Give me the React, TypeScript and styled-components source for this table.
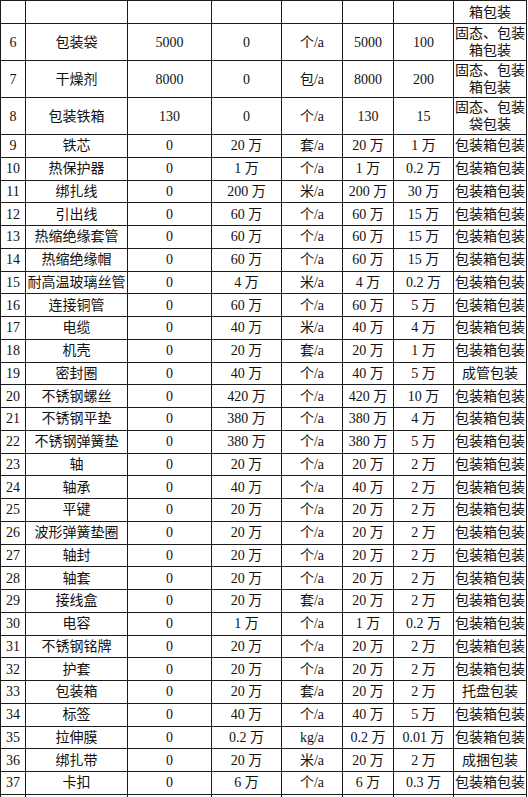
import React from "react";
import styled, { createGlobalStyle } from "styled-components";

const GlobalStyle = createGlobalStyle`
  html, body {
    margin: 0;
    padding: 0;
    background: #fff;
  }
  body {
    font-family: "Liberation Serif", "Noto Sans CJK SC", serif;
    color: #111;
  }
`;

type Row = {
  no: string;
  name: string;
  before: string;
  added: string;
  unit: string;
  total: string;
  stock: string;
  pack: string[];
};

const colWidths = [25, 102, 84, 70, 61, 51, 60, 73];

const pk = ["包装箱包装"];

const rows: Row[] = [
  { no: "6", name: "包装袋", before: "5000", added: "0", unit: "个/a", total: "5000", stock: "100", pack: ["固态、包装", "箱包装"] },
  { no: "7", name: "干燥剂", before: "8000", added: "0", unit: "包/a", total: "8000", stock: "200", pack: ["固态、包装", "箱包装"] },
  { no: "8", name: "包装铁箱", before: "130", added: "0", unit: "个/a", total: "130", stock: "15", pack: ["固态、包装", "袋包装"] },
  { no: "9", name: "铁芯", before: "0", added: "20 万", unit: "套/a", total: "20 万", stock: "1 万", pack: pk },
  { no: "10", name: "热保护器", before: "0", added: "1 万", unit: "个/a", total: "1 万", stock: "0.2 万", pack: pk },
  { no: "11", name: "绑扎线", before: "0", added: "200 万", unit: "米/a", total: "200 万", stock: "30 万", pack: pk },
  { no: "12", name: "引出线", before: "0", added: "60 万", unit: "个/a", total: "60 万", stock: "15 万", pack: pk },
  { no: "13", name: "热缩绝缘套管", before: "0", added: "60 万", unit: "个/a", total: "60 万", stock: "15 万", pack: pk },
  { no: "14", name: "热缩绝缘帽", before: "0", added: "60 万", unit: "个/a", total: "60 万", stock: "15 万", pack: pk },
  { no: "15", name: "耐高温玻璃丝管", before: "0", added: "4 万", unit: "米/a", total: "4 万", stock: "0.2 万", pack: pk },
  { no: "16", name: "连接铜管", before: "0", added: "60 万", unit: "个/a", total: "60 万", stock: "5 万", pack: pk },
  { no: "17", name: "电缆", before: "0", added: "40 万", unit: "米/a", total: "40 万", stock: "4 万", pack: pk },
  { no: "18", name: "机壳", before: "0", added: "20 万", unit: "套/a", total: "20 万", stock: "1 万", pack: pk },
  { no: "19", name: "密封圈", before: "0", added: "40 万", unit: "个/a", total: "40 万", stock: "5 万", pack: ["成管包装"] },
  { no: "20", name: "不锈钢螺丝", before: "0", added: "420 万", unit: "个/a", total: "420 万", stock: "10 万", pack: pk },
  { no: "21", name: "不锈钢平垫", before: "0", added: "380 万", unit: "个/a", total: "380 万", stock: "4 万", pack: pk },
  { no: "22", name: "不锈钢弹簧垫", before: "0", added: "380 万", unit: "个/a", total: "380 万", stock: "5 万", pack: pk },
  { no: "23", name: "轴", before: "0", added: "20 万", unit: "个/a", total: "20 万", stock: "2 万", pack: pk },
  { no: "24", name: "轴承", before: "0", added: "40 万", unit: "个/a", total: "40 万", stock: "2 万", pack: pk },
  { no: "25", name: "平键", before: "0", added: "20 万", unit: "个/a", total: "20 万", stock: "2 万", pack: pk },
  { no: "26", name: "波形弹簧垫圈", before: "0", added: "20 万", unit: "个/a", total: "20 万", stock: "2 万", pack: pk },
  { no: "27", name: "轴封", before: "0", added: "20 万", unit: "个/a", total: "20 万", stock: "2 万", pack: pk },
  { no: "28", name: "轴套", before: "0", added: "20 万", unit: "个/a", total: "20 万", stock: "2 万", pack: pk },
  { no: "29", name: "接线盒", before: "0", added: "20 万", unit: "套/a", total: "20 万", stock: "2 万", pack: pk },
  { no: "30", name: "电容", before: "0", added: "1 万", unit: "个/a", total: "1 万", stock: "0.2 万", pack: pk },
  { no: "31", name: "不锈钢铭牌", before: "0", added: "20 万", unit: "个/a", total: "20 万", stock: "2 万", pack: pk },
  { no: "32", name: "护套", before: "0", added: "20 万", unit: "个/a", total: "20 万", stock: "2 万", pack: pk },
  { no: "33", name: "包装箱", before: "0", added: "20 万", unit: "套/a", total: "20 万", stock: "2 万", pack: ["托盘包装"] },
  { no: "34", name: "标签", before: "0", added: "40 万", unit: "个/a", total: "40 万", stock: "5 万", pack: pk },
  { no: "35", name: "拉伸膜", before: "0", added: "0.2 万", unit: "kg/a", total: "0.2 万", stock: "0.01 万", pack: pk },
  { no: "36", name: "绑扎带", before: "0", added: "20 万", unit: "米/a", total: "20 万", stock: "2 万", pack: ["成捆包装"] },
  { no: "37", name: "卡扣", before: "0", added: "6 万", unit: "个/a", total: "6 万", stock: "0.3 万", pack: pk },
];

const Sheet = styled.table`
  width: 526px;
  border-collapse: collapse;
  table-layout: fixed;
  font-size: 14px;
  line-height: 17px;
`;

const TableRow = styled.tr<{ $tall?: boolean; $h?: number }>`
  height: ${({ $tall, $h }) => ($h ? `${$h}px` : $tall ? "37px" : "22.75px")};
`;

const Cell = styled.td`
  border: 1px solid #1c1c1c;
  padding: 0;
  text-align: center;
  vertical-align: middle;
  white-space: nowrap;
  overflow: hidden;
`;

const App: React.FC = () => {
  return (
    <>
      <GlobalStyle />
      <Sheet>
        <colgroup>
          {colWidths.map((w, i) => (
            <col key={i} style={{ width: w }} />
          ))}
        </colgroup>
        <tbody>
          <TableRow $h={23}>
            <Cell />
            <Cell />
            <Cell />
            <Cell />
            <Cell />
            <Cell />
            <Cell />
            <Cell>箱包装</Cell>
          </TableRow>
          {rows.map((r) => (
            <TableRow key={r.no} $tall={r.pack.length > 1}>
              <Cell>{r.no}</Cell>
              <Cell>{r.name}</Cell>
              <Cell>{r.before}</Cell>
              <Cell>{r.added}</Cell>
              <Cell>{r.unit}</Cell>
              <Cell>{r.total}</Cell>
              <Cell>{r.stock}</Cell>
              <Cell>
                {r.pack.map((p, i) => (
                  <React.Fragment key={i}>
                    {i > 0 && <br />}
                    {p}
                  </React.Fragment>
                ))}
              </Cell>
            </TableRow>
          ))}
          <TableRow $h={20}>
            <Cell />
            <Cell />
            <Cell />
            <Cell />
            <Cell />
            <Cell />
            <Cell />
            <Cell />
          </TableRow>
        </tbody>
      </Sheet>
    </>
  );
};

export default App;
